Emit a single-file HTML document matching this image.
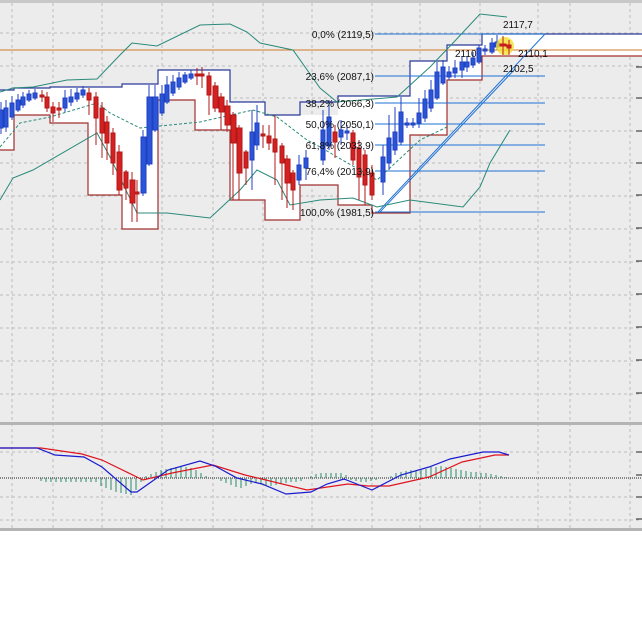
<!DOCTYPE html>
<html><head><meta charset="utf-8"><style>
html,body{margin:0;padding:0;background:#fff;}
svg{display:block;font-family:"Liberation Sans",sans-serif;}
</style></head><body>
<svg width="642" height="636" viewBox="0 0 642 636" xmlns="http://www.w3.org/2000/svg">
<rect x="0" y="0" width="642" height="530" fill="#ececec"/>
<rect x="0" y="0" width="642" height="3" fill="#c8c8c8"/>
<g stroke="#bdbdbd" stroke-dasharray="3,3" stroke-width="1">
<line x1="12" y1="3" x2="12" y2="528"/><line x1="53" y1="3" x2="53" y2="528"/><line x1="102" y1="3" x2="102" y2="528"/><line x1="162" y1="3" x2="162" y2="528"/><line x1="213" y1="3" x2="213" y2="528"/><line x1="263" y1="3" x2="263" y2="528"/><line x1="312" y1="3" x2="312" y2="528"/><line x1="372" y1="3" x2="372" y2="528"/><line x1="420" y1="3" x2="420" y2="528"/><line x1="480" y1="3" x2="480" y2="528"/><line x1="538" y1="3" x2="538" y2="528"/><line x1="570" y1="3" x2="570" y2="528"/><line x1="630" y1="3" x2="630" y2="528"/>
<line x1="0" y1="33" x2="642" y2="33"/><line x1="0" y1="66" x2="642" y2="66"/><line x1="0" y1="98" x2="642" y2="98"/><line x1="0" y1="131" x2="642" y2="131"/><line x1="0" y1="163" x2="642" y2="163"/><line x1="0" y1="196" x2="642" y2="196"/><line x1="0" y1="229" x2="642" y2="229"/><line x1="0" y1="262" x2="642" y2="262"/><line x1="0" y1="295" x2="642" y2="295"/><line x1="0" y1="328" x2="642" y2="328"/><line x1="0" y1="361" x2="642" y2="361"/><line x1="0" y1="394" x2="642" y2="394"/>
<line x1="0" y1="452" x2="642" y2="452"/><line x1="0" y1="497" x2="642" y2="497"/><line x1="0" y1="520" x2="642" y2="520"/>
</g>
<g fill="#fff">
<rect x="0" y="90" width="14" height="60"/><rect x="14" y="88" width="36" height="27"/><rect x="50" y="87" width="38" height="36"/><rect x="88" y="87" width="34" height="108"/><rect x="122" y="84" width="36" height="145"/><rect x="158" y="70" width="37" height="30"/><rect x="195" y="70" width="35" height="60"/><rect x="230" y="102" width="35" height="98"/><rect x="265" y="115" width="35" height="105"/><rect x="300" y="115" width="38" height="70"/><rect x="338" y="96" width="34" height="109"/><rect x="372" y="96" width="38" height="117"/><rect x="410" y="61" width="37" height="74"/><rect x="447" y="45" width="35" height="35"/><rect x="482" y="34" width="160" height="22"/>
</g>
<path d="M0,90H14V88H50V87H122V84H158V70H230V102H265V115H300V102H338V96H372V96H410V61H447V45H482V34H642" fill="none" stroke="#2a3a9a" stroke-width="1.2"/>
<path d="M0,150H14V115H50V123H88V195H122V229H158V100H195V130H230V200H265V220H300V185H338V205H372V213H410V135H447V80H482V56H642" fill="none" stroke="#a03030" stroke-width="1.2"/>
<line x1="0" y1="50" x2="642" y2="50" stroke="#d07a2a" stroke-width="1"/>
<g stroke="#1f72d6" stroke-width="1">
<line x1="375" y1="34" x2="545" y2="34"/><line x1="375" y1="76" x2="545" y2="76"/><line x1="375" y1="103" x2="545" y2="103"/><line x1="375" y1="124" x2="545" y2="124"/><line x1="375" y1="145" x2="545" y2="145"/><line x1="375" y1="171" x2="545" y2="171"/><line x1="375" y1="212" x2="545" y2="212"/>
<line x1="377" y1="213" x2="545" y2="34"/><line x1="380" y1="212" x2="515" y2="69"/>
</g>
<g fill="none" stroke="#2a8a7a" stroke-width="1">
<path d="M0,92 13,88 33,87 67,80 97,79 120,55 132,43 157,46 200,25 230,24 247,32 260,43 293,50 320,88 337,102 397,97 430,67 453,43 480,14 507,17"/>
<path d="M0,200 13,178 33,170 97,133 110,157 137,213 167,213 210,218 240,190 257,170 277,180 290,205 320,200 353,198 377,207 410,200 463,207 480,187 490,163 510,130"/>
<path d="M0,147 20,123 50,117 97,103 110,113 140,128 200,122 253,110 277,117 307,140 320,147 377,180 420,140 447,127" stroke-dasharray="3,2"/>
</g>
<g stroke-width="1">
<g stroke="#2040c0" fill="#2a55d8">
<line x1="1" y1="102" x2="1" y2="134"/><rect x="-1" y="110" width="4" height="18"/>
<line x1="6" y1="100" x2="6" y2="132"/><rect x="4" y="108" width="4" height="19"/>
<line x1="12" y1="96" x2="12" y2="120"/><rect x="10" y="103" width="4" height="14"/>
<line x1="18" y1="94" x2="18" y2="112"/><rect x="16" y="100" width="4" height="10"/>
<line x1="23" y1="92" x2="23" y2="108"/><rect x="21" y="97" width="4" height="8"/>
<line x1="29" y1="90" x2="29" y2="102"/><rect x="27" y="94" width="4" height="6"/>
<line x1="35" y1="89" x2="35" y2="100"/><rect x="33" y="93" width="4" height="5"/>
<line x1="65" y1="90" x2="65" y2="112"/><rect x="63" y="98" width="4" height="10"/>
<line x1="71" y1="89" x2="71" y2="106"/><rect x="69" y="97" width="4" height="5"/>
<line x1="77" y1="88" x2="77" y2="102"/><rect x="75" y="93" width="4" height="6"/>
<line x1="83" y1="86" x2="83" y2="98"/><rect x="81" y="90" width="4" height="5"/>
<line x1="143" y1="130" x2="143" y2="196"/><rect x="141" y="137" width="5" height="56"/>
<line x1="149" y1="85" x2="149" y2="166"/><rect x="147" y="97" width="5" height="67"/>
<line x1="155" y1="85" x2="155" y2="132"/><rect x="153" y="97" width="5" height="33"/>
<line x1="162" y1="85" x2="162" y2="116"/><rect x="160" y="94" width="4" height="19"/>
<line x1="167" y1="76" x2="167" y2="104"/><rect x="165" y="85" width="4" height="17"/>
<line x1="173" y1="75" x2="173" y2="96"/><rect x="171" y="82" width="4" height="11"/>
<line x1="179" y1="72" x2="179" y2="90"/><rect x="177" y="78" width="4" height="9"/>
<line x1="185" y1="72" x2="185" y2="84"/><rect x="183" y="75" width="4" height="7"/>
<line x1="191" y1="70" x2="191" y2="80"/><rect x="189" y="74" width="4" height="4"/>
<line x1="252" y1="110" x2="252" y2="190"/><rect x="250" y="132" width="4" height="28"/>
<line x1="257" y1="105" x2="257" y2="150"/><rect x="255" y="123" width="4" height="22"/>
<line x1="299" y1="155" x2="299" y2="185"/><rect x="297" y="165" width="4" height="15"/>
<line x1="306" y1="150" x2="306" y2="180"/><rect x="304" y="158" width="4" height="10"/>
<line x1="323" y1="110" x2="323" y2="165"/><rect x="321" y="130" width="4" height="30"/>
<line x1="329" y1="100" x2="329" y2="150"/><rect x="327" y="117" width="4" height="29"/>
<line x1="341" y1="120" x2="341" y2="145"/><rect x="339" y="130" width="4" height="7"/>
<line x1="347" y1="125" x2="347" y2="140"/><rect x="345" y="131" width="4" height="2"/>
<line x1="383" y1="145" x2="383" y2="195"/><rect x="381" y="157" width="4" height="25"/>
<line x1="389" y1="115" x2="389" y2="170"/><rect x="387" y="138" width="4" height="25"/>
<line x1="395" y1="107" x2="395" y2="155"/><rect x="393" y="132" width="4" height="18"/>
<line x1="401" y1="97" x2="401" y2="145"/><rect x="399" y="112" width="4" height="30"/>
<line x1="407" y1="118" x2="407" y2="128"/><rect x="405" y="123" width="4" height="2"/>
<line x1="413" y1="118" x2="413" y2="128"/><rect x="411" y="123" width="4" height="2"/>
<line x1="419" y1="98" x2="419" y2="128"/><rect x="417" y="113" width="4" height="10"/>
<line x1="425" y1="90" x2="425" y2="122"/><rect x="423" y="99" width="4" height="19"/>
<line x1="431" y1="80" x2="431" y2="112"/><rect x="429" y="90" width="4" height="18"/>
<line x1="437" y1="62" x2="437" y2="100"/><rect x="435" y="72" width="4" height="26"/>
<line x1="443" y1="60" x2="443" y2="85"/><rect x="441" y="67" width="4" height="16"/>
<line x1="449" y1="66" x2="449" y2="80"/><rect x="447" y="72" width="4" height="5"/>
<line x1="455" y1="60" x2="455" y2="78"/><rect x="453" y="68" width="4" height="5"/>
<line x1="462" y1="56" x2="462" y2="78"/><rect x="460" y="62" width="4" height="8"/>
<line x1="467" y1="56" x2="467" y2="72"/><rect x="465" y="62" width="4" height="5"/>
<line x1="473" y1="52" x2="473" y2="68"/><rect x="471" y="58" width="4" height="7"/>
<line x1="479" y1="45" x2="479" y2="64"/><rect x="477" y="48" width="4" height="14"/>
<line x1="485" y1="45" x2="485" y2="55"/><rect x="483" y="49" width="4" height="2"/>
<line x1="492" y1="38" x2="492" y2="54"/><rect x="490" y="43" width="4" height="9"/>
<line x1="497" y1="35" x2="497" y2="50"/><rect x="495" y="42" width="4" height="5"/>
</g>
<g stroke="#b01818" fill="#d42020">
<line x1="42" y1="90" x2="42" y2="102"/><rect x="40" y="95" width="4" height="2"/>
<line x1="47" y1="92" x2="47" y2="112"/><rect x="45" y="97" width="4" height="11"/>
<line x1="53" y1="102" x2="53" y2="122"/><rect x="51" y="107" width="4" height="6"/>
<line x1="59" y1="102" x2="59" y2="118"/><rect x="57" y="108" width="4" height="2"/>
<line x1="89" y1="88" x2="89" y2="115"/><rect x="87" y="93" width="4" height="7"/>
<line x1="96" y1="92" x2="96" y2="145"/><rect x="94" y="97" width="4" height="21"/>
<line x1="102" y1="102" x2="102" y2="158"/><rect x="100" y="108" width="4" height="25"/>
<line x1="107" y1="116" x2="107" y2="160"/><rect x="105" y="122" width="4" height="21"/>
<line x1="113" y1="128" x2="113" y2="175"/><rect x="111" y="133" width="4" height="30"/>
<line x1="119" y1="145" x2="119" y2="195"/><rect x="117" y="152" width="5" height="38"/>
<line x1="126" y1="170" x2="126" y2="200"/><rect x="124" y="172" width="4" height="16"/>
<line x1="132" y1="172" x2="132" y2="222"/><rect x="130" y="180" width="5" height="23"/>
<line x1="137" y1="180" x2="137" y2="222"/><rect x="135" y="192" width="4" height="2"/>
<line x1="197" y1="68" x2="197" y2="85"/><rect x="195" y="74" width="4" height="2"/>
<line x1="202" y1="67" x2="202" y2="88"/><rect x="200" y="74" width="4" height="2"/>
<line x1="209" y1="72" x2="209" y2="115"/><rect x="207" y="76" width="4" height="19"/>
<line x1="215" y1="82" x2="215" y2="112"/><rect x="213" y="86" width="5" height="22"/>
<line x1="221" y1="93" x2="221" y2="130"/><rect x="219" y="97" width="5" height="15"/>
<line x1="227" y1="100" x2="227" y2="132"/><rect x="225" y="106" width="5" height="19"/>
<line x1="233" y1="112" x2="233" y2="200"/><rect x="231" y="115" width="5" height="28"/>
<line x1="239" y1="125" x2="239" y2="200"/><rect x="237" y="128" width="5" height="45"/>
<line x1="246" y1="150" x2="246" y2="185"/><rect x="244" y="152" width="4" height="16"/>
<line x1="263" y1="125" x2="263" y2="148"/><rect x="261" y="134" width="4" height="2"/>
<line x1="269" y1="125" x2="269" y2="150"/><rect x="267" y="136" width="4" height="7"/>
<line x1="275" y1="115" x2="275" y2="185"/><rect x="273" y="139" width="4" height="13"/>
<line x1="282" y1="143" x2="282" y2="200"/><rect x="280" y="146" width="4" height="17"/>
<line x1="287" y1="155" x2="287" y2="208"/><rect x="285" y="159" width="5" height="24"/>
<line x1="293" y1="170" x2="293" y2="210"/><rect x="291" y="173" width="4" height="17"/>
<line x1="335" y1="125" x2="335" y2="158"/><rect x="333" y="132" width="4" height="10"/>
<line x1="353" y1="130" x2="353" y2="165"/><rect x="351" y="133" width="4" height="27"/>
<line x1="359" y1="140" x2="359" y2="200"/><rect x="357" y="148" width="4" height="29"/>
<line x1="365" y1="150" x2="365" y2="205"/><rect x="363" y="155" width="4" height="30"/>
<line x1="372" y1="165" x2="372" y2="200"/><rect x="370" y="173" width="4" height="22"/>
</g>
<circle cx="505" cy="46" r="9" fill="#f2e030" opacity="0.8"/>
<g stroke="#c01818" fill="#d42020">
<line x1="503" y1="36" x2="503" y2="55"/><rect x="500" y="44" width="6" height="2"/>
<line x1="509" y1="40" x2="509" y2="55"/><rect x="507" y="45" width="4" height="3"/>
</g>
</g>
<g font-size="10" fill="#111" text-anchor="end">
<text x="374" y="38">0,0%  (2119,5)</text>
<text x="374" y="80">23,6%  (2087,1)</text>
<text x="374" y="107">38,2%  (2066,3)</text>
<text x="374" y="128">50,0%  (2050,1)</text>
<text x="374" y="149">61,8%  (2033,9)</text>
<text x="374" y="175">76,4%  (2013,9)</text>
<text x="374" y="216">100,0%  (1981,5)</text>
</g>
<g font-size="10" fill="#111">
<text x="503" y="28">2117,7</text>
<text x="518" y="57">2110,1</text>
<text x="503" y="72">2102,5</text>
<text x="455" y="57">2110</text>
</g>
<g stroke="#222" stroke-width="1">
<line x1="636" y1="67" x2="642" y2="67"/><line x1="636" y1="98" x2="642" y2="98"/><line x1="636" y1="131" x2="642" y2="131"/><line x1="636" y1="163" x2="642" y2="163"/><line x1="636" y1="195" x2="642" y2="195"/><line x1="636" y1="228" x2="642" y2="228"/><line x1="636" y1="261" x2="642" y2="261"/><line x1="636" y1="294" x2="642" y2="294"/><line x1="636" y1="327" x2="642" y2="327"/><line x1="636" y1="360" x2="642" y2="360"/><line x1="636" y1="393" x2="642" y2="393"/>
<line x1="636" y1="452" x2="642" y2="452"/><line x1="636" y1="475" x2="642" y2="475"/><line x1="636" y1="497" x2="642" y2="497"/><line x1="636" y1="519" x2="642" y2="519"/>
</g>
<rect x="0" y="422" width="642" height="3" fill="#b4b4b4"/>
<rect x="0" y="528" width="642" height="3" fill="#b4b4b4"/>
<line x1="0" y1="478" x2="642" y2="478" stroke="#222" stroke-dasharray="1,1"/>
<path stroke="#2a8a6a" stroke-width="1" fill="none" d="M41,478v3M46,478v4M51,478v4M56,478v4M61,478v4M66,478v4M71,478v4M76,478v4M81,478v4M86,478v4M91,478v4M96,478v4M101,478v8M106,478v10M111,478v12M116,478v14M121,478v15M126,478v16M131,478v17M136,478v12M141,478v4M146,478v-2M151,478v-4M156,478v-6M161,478v-8M166,478v-9M171,478v-10M176,478v-11M181,478v-12M186,478v-11M191,478v-10M196,478v-8M201,478v-5M206,478v-2M221,478v3M226,478v5M231,478v7M236,478v9M241,478v10M246,478v8M251,478v6M256,478v5M261,478v6M266,478v7M271,478v8M276,478v7M281,478v6M286,478v5M291,478v4M296,478v4M301,478v3M311,478v-2M316,478v-4M321,478v-5M326,478v-5M331,478v-5M336,478v-5M341,478v-5M346,478v-3M351,478v2M356,478v3M361,478v4M366,478v4M371,478v3M376,478v2M391,478v-2M396,478v-5M401,478v-6M406,478v-7M411,478v-8M416,478v-7M421,478v-8M426,478v-9M431,478v-11M436,478v-11M441,478v-12M446,478v-11M451,478v-10M456,478v-9M461,478v-8M466,478v-7M471,478v-6M476,478v-6M481,478v-5M486,478v-5M491,478v-4M496,478v-3M501,478v-2M506,478v-1"/>
<path d="M0,448 41,448 82,454 102,460 143,480 172,473 213,465 245,475 307,490 348,484 368,486 389,486 429,477 462,462 495,455 509,455" fill="none" stroke="#e0141e" stroke-width="1.2"/>
<path d="M0,448 37,448 55,455 84,457 102,467 131,492 137,492 168,470 200,461 215,466 237,478 262,484 286,494 311,492 327,484 344,479 372,490 401,475 429,467 450,459 483,452 499,452 509,455" fill="none" stroke="#1a1ad0" stroke-width="1.2"/>
</svg>
</body></html>
